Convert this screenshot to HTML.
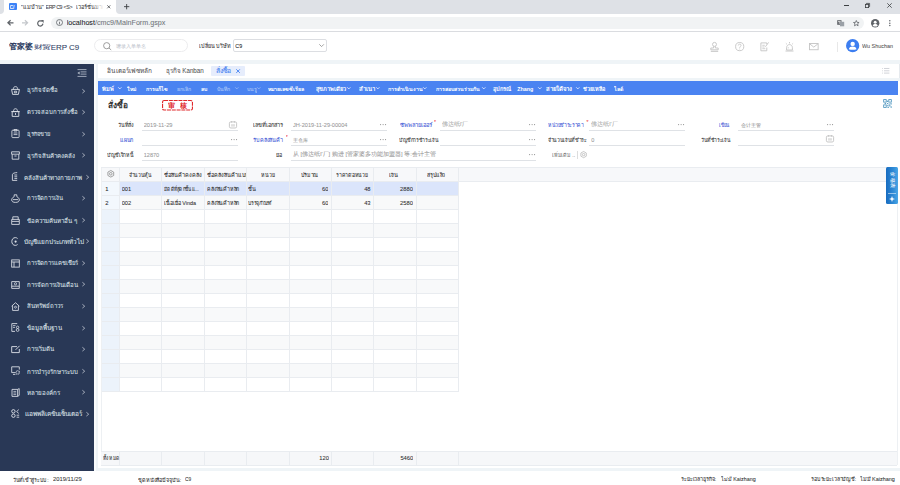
<!DOCTYPE html>
<html><head><meta charset="utf-8"><title>ERP C9</title>
<style>
html,body{margin:0;padding:0;}
body{width:900px;height:485px;overflow:hidden;position:relative;background:#fff;font-family:"Liberation Sans",sans-serif;}
.r{position:absolute;box-sizing:border-box;}
.t{position:absolute;white-space:nowrap;overflow:hidden;-webkit-text-stroke:0.06px currentColor;}
svg{overflow:visible;}
</style></head><body>

<div class="r" style="left:0.00px;top:0.00px;width:900.00px;height:14.00px;background:#dee1e6;"></div>
<div class="r" style="left:0.00px;top:0.00px;width:120.00px;height:14.00px;background:#ffffff;"></div>
<div class="r" style="left:0.00px;top:0.00px;width:4.00px;height:14.00px;background:#dee1e6;border-bottom-right-radius:4px;"></div>
<div class="r" style="left:116.00px;top:0.00px;width:784.00px;height:14.00px;background:#dee1e6;border-bottom-left-radius:4px;"></div>
<div class="r" style="left:9.30px;top:3.00px;width:7.70px;height:7.00px;background:#3b82f6;border-radius:1px;"></div>
<div class="t " style="top:3.20px;height:8.00px;line-height:8.00px;font-size:5px;color:#fff;font-weight:700;-webkit-text-stroke:0;left:9.60px;width:7.20px;letter-spacing:-0.3px;">C/</div>
<div class="t " style="top:3.12px;height:8.96px;line-height:8.96px;font-size:5.6px;color:#3c4043;left:20.80px;width:25.00px;">"แม่บ้าน"</div>
<div class="t " style="top:2.66px;height:8.48px;line-height:8.48px;font-size:5.3px;color:#3c4043;left:45.60px;width:17.00px;letter-spacing:-0.42px;">ERP C9</div>
<div class="t " style="top:2.66px;height:8.48px;line-height:8.48px;font-size:5.3px;color:#3c4043;left:63.40px;width:11.00px;letter-spacing:-0.3px;">&lt;S&gt;</div>
<div class="t " style="top:3.12px;height:8.96px;line-height:8.96px;font-size:5.6px;color:#3c4043;left:75.80px;width:27.00px;">เวอร์ชั่นมาตรฐาน</div>
<div class="r" style="left:92.00px;top:0.00px;width:12.00px;height:14.00px;background:linear-gradient(90deg,rgba(255,255,255,0),#fff);"></div>
<svg class="r" style="left:106.90px;top:5.00px;" width="3.6" height="3.6" viewBox="0 0 3.6 3.6"><path d="M0.3 0.3L3.3 3.3M3.3 0.3L0.3 3.3" stroke="#3c4043" stroke-width="0.75"/></svg>
<svg class="r" style="left:124.00px;top:3.60px;" width="5.3" height="5.3" viewBox="0 0 5.3 5.3"><path d="M2.65 0V5.3M0 2.65H5.3" stroke="#3c4043" stroke-width="0.9"/></svg>
<div class="r" style="left:844.00px;top:5.10px;width:5.00px;height:0.65px;background:#3c4043;"></div>
<svg class="r" style="left:865.00px;top:3.00px;" width="5" height="5" viewBox="0 0 5 5"><rect x="0.4" y="1.4" width="3.2" height="3.2" fill="none" stroke="#3c4043" stroke-width="0.8"/><path d="M1.4 1.4V0.4H4.6V3.6H3.6" fill="none" stroke="#3c4043" stroke-width="0.8"/></svg>
<svg class="r" style="left:886.80px;top:3.00px;" width="5" height="5" viewBox="0 0 5 5"><path d="M0.3 0.3L4.7 4.7M4.7 0.3L0.3 4.7" stroke="#3c4043" stroke-width="0.8"/></svg>
<div class="r" style="left:0.00px;top:14.00px;width:900.00px;height:17.00px;background:#ffffff;"></div>
<div class="r" style="left:0.00px;top:31.00px;width:900.00px;height:1.00px;background:#dadce0;"></div>
<svg class="r" style="left:7.00px;top:20.00px;" width="6.5" height="5.6" viewBox="0 0 6.5 5.6"><path d="M6.5 2.8H1M3.6 0.2L0.9 2.8L3.6 5.4" fill="none" stroke="#5f6368" stroke-width="1.25"/></svg>
<svg class="r" style="left:22.00px;top:20.00px;" width="6.5" height="5.6" viewBox="0 0 6.5 5.6"><path d="M0 2.8H5.5M2.9 0.2L5.6 2.8L2.9 5.4" fill="none" stroke="#c4c7cb" stroke-width="1.2"/></svg>
<svg class="r" style="left:37.00px;top:19.60px;" width="6.8" height="6.8" viewBox="0 0 6.8 6.8"><path d="M5.9 3.6A2.6 2.6 0 1 1 4.9 1.4" fill="none" stroke="#5f6368" stroke-width="1.2"/><path d="M3.7 0H6.6V2.9Z" fill="#5f6368"/></svg>
<div class="r" style="left:51.00px;top:16.50px;width:813.00px;height:12.50px;background:#f1f3f4;border-radius:6.25px;"></div>
<svg class="r" style="left:55.50px;top:19.30px;" width="7" height="7" viewBox="0 0 7 7"><circle cx="3.5" cy="3.5" r="3" fill="none" stroke="#5f6368" stroke-width="0.8"/><path d="M3.5 3V5.4" stroke="#5f6368" stroke-width="0.8"/><circle cx="3.5" cy="1.9" r="0.45" fill="#5f6368"/></svg>
<div class="t " style="top:17.57px;height:11.46px;line-height:11.46px;font-size:7.163px;color:#70757a;left:66.70px;width:102.60px;"><span style="color:#202124">localhost</span>/cmc9/MainForm.gspx</div>
<svg class="r" style="left:837.00px;top:19.50px;" width="7.4" height="6.5" viewBox="0 0 7.4 6.5"><rect x="0.2" y="0.2" width="4.3" height="4.6" fill="#5f6368"/><rect x="3" y="1.8" width="4.2" height="4.5" fill="#9aa0a6"/><path d="M1 1.5H3.7M2.3 1.5V3.8" stroke="#fff" stroke-width="0.6"/></svg>
<svg class="r" style="left:852.80px;top:19.60px;" width="6.6" height="6.4" viewBox="0 0 6.6 6.4"><path d="M3.3 0.5L4.1 2.4L6.1 2.5L4.6 3.8L5.1 5.8L3.3 4.7L1.5 5.8L2 3.8L0.5 2.5L2.5 2.4Z" fill="none" stroke="#5f6368" stroke-width="0.8" stroke-linejoin="round"/></svg>
<svg class="r" style="left:870.60px;top:18.80px;" width="8.4" height="8.4" viewBox="0 0 8.4 8.4"><circle cx="4.2" cy="4.2" r="4.2" fill="#5f6368"/><circle cx="4.2" cy="3.2" r="1.5" fill="#fff"/><path d="M1.6 6.4C2.3 5.2 3.2 4.9 4.2 4.9C5.2 4.9 6.1 5.2 6.8 6.4C6.1 7.2 5.2 7.6 4.2 7.6C3.2 7.6 2.3 7.2 1.6 6.4Z" fill="#fff"/></svg>
<svg class="r" style="left:889.30px;top:19.70px;" width="1.6" height="6.4" viewBox="0 0 1.6 6.4"><circle cx="0.8" cy="0.8" r="0.75" fill="#5f6368"/><circle cx="0.8" cy="3.2" r="0.75" fill="#5f6368"/><circle cx="0.8" cy="5.6" r="0.75" fill="#5f6368"/></svg>
<div class="t " style="top:40.55px;height:12.89px;line-height:12.89px;font-size:8.059px;color:#2b3a5e;font-weight:700;-webkit-text-stroke:0;left:9.00px;width:29.30px;">管家婆</div>
<div class="t " style="top:41.40px;height:13.20px;line-height:13.20px;font-size:8.25px;color:#34426a;left:34.30px;width:20.50px;transform:scaleY(0.68);">财贸</div>
<div class="t " style="top:42.12px;height:12.77px;line-height:12.77px;font-size:7.981px;color:#2b3a5e;left:50.80px;width:20.40px;">ERP</div>
<div class="t " style="top:42.11px;height:12.77px;line-height:12.77px;font-size:7.983px;color:#2b3a5e;left:69.00px;width:14.20px;">C9</div>
<div class="r" style="left:94.00px;top:39.00px;width:94.00px;height:13.30px;background:#fff;border:0.7px solid #ececee;border-radius:7px;"></div>
<svg class="r" style="left:102.80px;top:41.80px;" width="8.6" height="8.2" viewBox="0 0 8.6 8.2"><circle cx="3.7" cy="3.7" r="3.1" fill="none" stroke="#8c8c8c" stroke-width="0.85"/><path d="M6 6L8.2 8" stroke="#8c8c8c" stroke-width="0.85"/></svg>
<div class="t " style="top:42.41px;height:8.39px;line-height:8.39px;font-size:5.242px;color:#c0c4cc;left:116.30px;width:37.70px;">请录入单单名</div>
<div class="t " style="top:41.66px;height:9.28px;line-height:9.28px;font-size:5.8px;color:#333;left:199.20px;width:37.88px;transform:scaleX(0.940);transform-origin:0 50%;">เปลี่ยน บริษัท</div>
<div class="r" style="left:233.30px;top:39.00px;width:93.40px;height:13.30px;background:#fff;border:0.7px solid #dcdee2;border-radius:2px;"></div>
<div class="t " style="top:42.18px;height:8.64px;line-height:8.64px;font-size:5.399px;color:#222;left:235.30px;width:10.90px;">C9</div>
<svg class="r" style="left:319.40px;top:44.30px;" width="5.2" height="3" viewBox="0 0 5.2 3"><path d="M0.3 0.3L2.6 2.6L4.9 0.3" fill="none" stroke="#8c8c8c" stroke-width="0.8"/></svg>
<svg class="r" style="left:710.00px;top:41.80px;" width="9" height="10" viewBox="0 0 9 10"><circle cx="4.5" cy="2.4" r="2" fill="none" stroke="#c4c4c4" stroke-width="0.9"/><path d="M3.6 4.3V6H0.8V7.8H8.2V6H5.4V4.3" fill="none" stroke="#c4c4c4" stroke-width="0.9"/><path d="M0.8 9.3H8.2" stroke="#c4c4c4" stroke-width="1"/></svg>
<svg class="r" style="left:735.00px;top:42.30px;" width="9.4" height="9.2" viewBox="0 0 9.4 9.2"><circle cx="4.7" cy="4.6" r="4.1" fill="none" stroke="#c4c4c4" stroke-width="0.9"/><path d="M3.3 3.5C3.3 2.6 4 2.1 4.7 2.1C5.5 2.1 6.1 2.7 6.1 3.4C6.1 4.4 4.7 4.6 4.7 5.6V5.9" fill="none" stroke="#c4c4c4" stroke-width="0.85"/><circle cx="4.7" cy="7.1" r="0.5" fill="#c4c4c4"/></svg>
<svg class="r" style="left:760.00px;top:42.30px;" width="9" height="9.4" viewBox="0 0 9 9.4"><path d="M6.8 2.3V0.9H0.9V8.8H6.8V5.5" fill="none" stroke="#c4c4c4" stroke-width="0.9"/><path d="M2.3 3.3H4.8M2.3 5H4.6M2.3 6.7H5.3" stroke="#c4c4c4" stroke-width="0.8"/><path d="M5.4 4.8L8.6 0.4" stroke="#c4c4c4" stroke-width="0.9"/></svg>
<svg class="r" style="left:785.00px;top:42.30px;" width="9" height="9.5" viewBox="0 0 9 9.5"><path d="M1.6 8V5.7C1.6 3.8 2.9 2.6 4.5 2.6C6.1 2.6 7.4 3.8 7.4 5.7V8Z" fill="none" stroke="#c4c4c4" stroke-width="0.9"/><path d="M0.5 9H8.5M4.5 0V1.4M0.9 1.3L1.8 2.2M8.1 1.3L7.2 2.2" stroke="#c4c4c4" stroke-width="0.9"/><path d="M3.3 6.4V5.2" stroke="#c4c4c4" stroke-width="0.7"/></svg>
<svg class="r" style="left:809.40px;top:43.40px;" width="9.6" height="7.2" viewBox="0 0 9.6 7.2"><rect x="0.45" y="0.45" width="8.7" height="6.3" fill="none" stroke="#c4c4c4" stroke-width="0.9"/><path d="M0.6 0.8L4.8 4.1L9 0.8" fill="none" stroke="#c4c4c4" stroke-width="0.9"/></svg>
<div class="r" style="left:837.30px;top:42.00px;width:0.70px;height:10.00px;background:#e8e8e8;"></div>
<svg class="r" style="left:845.60px;top:39.10px;" width="13.3" height="13.3" viewBox="0 0 13.3 13.3"><circle cx="6.65" cy="6.65" r="6.65" fill="#3d7ef0"/><circle cx="6.65" cy="4.9" r="2.2" fill="#fff"/><path d="M2.8 10.2C3.2 8.4 4.7 7.6 6.65 7.6C8.6 7.6 10.1 8.4 10.5 10.2C9.5 10.6 8.1 10.8 6.65 10.8C5.2 10.8 3.8 10.6 2.8 10.2Z" fill="#fff"/></svg>
<div class="t " style="top:41.63px;height:8.73px;line-height:8.73px;font-size:5.459px;color:#555;left:862.00px;width:35.10px;">Wu Shuchan</div>
<div class="r" style="left:0.00px;top:60.00px;width:900.00px;height:411.00px;background:#eff4f7;"></div>
<div class="r" style="left:0.00px;top:471.00px;width:900.00px;height:14.00px;background:#ffffff;"></div>
<div class="r" style="left:0.00px;top:64.00px;width:94.00px;height:407.00px;background:#293856;"></div>
<div class="r" style="left:94.00px;top:64.00px;width:1.50px;height:407.00px;background:#f9fbfc;"></div>
<svg class="r" style="left:77.20px;top:69.00px;" width="9.5" height="8" viewBox="0 0 9.5 8"><path d="M0.5 0.6H9.5M3.6 2.9H9.5M3.6 5.1H9.5M0.5 7.4H9.5" stroke="#b4bccb" stroke-width="0.85"/><path d="M2.6 2.4L0.4 4L2.6 5.6Z" fill="#b4bccb"/></svg>
<svg class="r" style="left:10.80px;top:86.20px;" width="9" height="9" viewBox="0 0 9 9"><path d="M0.6 3.4H8.4L7.4 8.4H1.6Z" fill="none" stroke="#dfe3ea" stroke-width="0.9"/><path d="M2.4 3.4V2.6C2.4 1.4 3.3 0.6 4.5 0.6C5.7 0.6 6.6 1.4 6.6 2.6V3.4M3.4 5.2H5.6V6.8H3.4Z" fill="none" stroke="#dfe3ea" stroke-width="0.85"/></svg>
<div class="t " style="top:86.49px;height:9.61px;line-height:9.61px;font-size:6.008px;color:#dde1e8;left:27.20px;width:33.80px;">ธุรกิจจัดซื้อ</div>
<svg class="r" style="left:82.10px;top:88.50px;" width="3.2" height="4.4" viewBox="0 0 3.2 4.4"><path d="M0.4 0.3L2.7 2.2L0.4 4.1" fill="none" stroke="#c9cfda" stroke-width="0.75"/></svg>
<svg class="r" style="left:10.80px;top:107.75px;" width="9" height="9" viewBox="0 0 9 9"><path d="M1.2 3.6H7.8V8.4H1.2Z" fill="none" stroke="#dfe3ea" stroke-width="0.9"/><path d="M2.6 3.6V2.6C2.6 1.5 3.4 0.7 4.5 0.7C5.6 0.7 6.4 1.5 6.4 2.6V3.6M0.2 3.6H8.8M4.5 5V7" fill="none" stroke="#dfe3ea" stroke-width="0.85"/></svg>
<div class="t " style="top:108.05px;height:9.60px;line-height:9.60px;font-size:6.002px;color:#dde1e8;left:27.20px;width:54.90px;">ตรวจสอบการสั่งซื้อ</div>
<svg class="r" style="left:82.10px;top:110.05px;" width="3.2" height="4.4" viewBox="0 0 3.2 4.4"><path d="M0.4 0.3L2.7 2.2L0.4 4.1" fill="none" stroke="#c9cfda" stroke-width="0.75"/></svg>
<svg class="r" style="left:10.80px;top:129.30px;" width="9" height="9" viewBox="0 0 9 9"><rect x="0.9" y="1.2" width="7.2" height="7.4" rx="0.8" fill="none" stroke="#dfe3ea" stroke-width="0.85"/><path d="M3 0.5H6V2H3Z M2.6 4H6.4M2.6 5.6H6.4" fill="none" stroke="#dfe3ea" stroke-width="0.8"/></svg>
<div class="t " style="top:129.79px;height:9.22px;line-height:9.22px;font-size:5.764px;color:#dde1e8;left:27.20px;width:28.90px;">ธุรกิจขาย</div>
<svg class="r" style="left:82.10px;top:131.60px;" width="3.2" height="4.4" viewBox="0 0 3.2 4.4"><path d="M0.4 0.3L2.7 2.2L0.4 4.1" fill="none" stroke="#c9cfda" stroke-width="0.75"/></svg>
<svg class="r" style="left:10.80px;top:150.85px;" width="9" height="9" viewBox="0 0 9 9"><path d="M0.6 0.8H8.4V3.2H0.6Z M1.2 3.2V8.2H7.8V3.2 M3.4 5H5.6" fill="none" stroke="#dfe3ea" stroke-width="0.85"/></svg>
<div class="t " style="top:151.06px;height:9.78px;line-height:9.78px;font-size:6.11px;color:#dde1e8;left:27.20px;width:51.90px;">ธุรกิจสินค้าคงคลัง</div>
<svg class="r" style="left:82.10px;top:153.15px;" width="3.2" height="4.4" viewBox="0 0 3.2 4.4"><path d="M0.4 0.3L2.7 2.2L0.4 4.1" fill="none" stroke="#c9cfda" stroke-width="0.75"/></svg>
<svg class="r" style="left:10.80px;top:172.40px;" width="9" height="9" viewBox="0 0 9 9"><path d="M6.2 0.6C3.6 0.6 1.4 1.4 1.4 2.6V8.4H6.2 M3.4 3H6.2M3.4 4.8H6.2M3.4 6.6H6.2" fill="none" stroke="#dfe3ea" stroke-width="0.85"/></svg>
<div class="t " style="top:172.55px;height:9.90px;line-height:9.90px;font-size:6.19px;color:#dde1e8;left:23.70px;width:65.40px;">คลังสินค้าทางกายภาพ</div>
<svg class="r" style="left:86.00px;top:174.70px;" width="3.2" height="4.4" viewBox="0 0 3.2 4.4"><path d="M0.4 0.3L2.7 2.2L0.4 4.1" fill="none" stroke="#c9cfda" stroke-width="0.75"/></svg>
<svg class="r" style="left:10.80px;top:193.95px;" width="9" height="9" viewBox="0 0 9 9"><path d="M3.2 0.8H5.8V2.6C7.4 3.4 8.3 4.6 8.3 6C8.3 7.6 6.8 8.4 4.5 8.4C2.2 8.4 0.7 7.6 0.7 6C0.7 4.6 1.6 3.4 3.2 2.6Z M2 5.6H7" fill="none" stroke="#dfe3ea" stroke-width="0.85"/></svg>
<div class="t " style="top:194.33px;height:9.44px;line-height:9.44px;font-size:5.897px;color:#dde1e8;left:27.20px;width:40.80px;">การจัดการเงิน</div>
<svg class="r" style="left:82.10px;top:196.25px;" width="3.2" height="4.4" viewBox="0 0 3.2 4.4"><path d="M0.4 0.3L2.7 2.2L0.4 4.1" fill="none" stroke="#c9cfda" stroke-width="0.75"/></svg>
<svg class="r" style="left:10.80px;top:215.50px;" width="9" height="9" viewBox="0 0 9 9"><path d="M1.8 3.4V0.8H7.2V3.4M0.7 3.4H8.3V5.4H0.7Z M0.7 5.4V8.4H8.3V5.4" fill="none" stroke="#dfe3ea" stroke-width="0.85"/></svg>
<div class="t " style="top:215.69px;height:9.82px;line-height:9.82px;font-size:6.137px;color:#dde1e8;left:27.20px;width:55.80px;">ข้อความค้นหาอื่น ๆ</div>
<svg class="r" style="left:82.10px;top:217.80px;" width="3.2" height="4.4" viewBox="0 0 3.2 4.4"><path d="M0.4 0.3L2.7 2.2L0.4 4.1" fill="none" stroke="#c9cfda" stroke-width="0.75"/></svg>
<svg class="r" style="left:10.80px;top:237.05px;" width="9" height="9" viewBox="0 0 9 9"><path d="M6.6 1.5C5.9 0.9 5.1 0.6 4.3 0.6C2.2 0.6 0.8 2.4 0.8 4.5C0.8 6.6 2.2 8.4 4.3 8.4C5.1 8.4 5.9 8.1 6.6 7.5" fill="none" stroke="#dfe3ea" stroke-width="0.9"/><circle cx="4.6" cy="4.6" r="1.1" fill="#dfe3ea"/></svg>
<div class="t " style="top:237.03px;height:10.23px;line-height:10.23px;font-size:6.396px;color:#dde1e8;left:23.70px;width:65.40px;">บัญชีแยกประเภททั่วไป</div>
<svg class="r" style="left:86.00px;top:239.35px;" width="3.2" height="4.4" viewBox="0 0 3.2 4.4"><path d="M0.4 0.3L2.7 2.2L0.4 4.1" fill="none" stroke="#c9cfda" stroke-width="0.75"/></svg>
<svg class="r" style="left:10.80px;top:258.60px;" width="9" height="9" viewBox="0 0 9 9"><rect x="0.7" y="0.9" width="7.6" height="7.2" fill="none" stroke="#dfe3ea" stroke-width="0.85"/><path d="M0.7 3H8.3M3 3V8.1" stroke="#dfe3ea" stroke-width="0.85"/></svg>
<div class="t " style="top:258.92px;height:9.56px;line-height:9.56px;font-size:5.977px;color:#dde1e8;left:27.20px;width:56.60px;">การจัดการแคชเชียร์</div>
<svg class="r" style="left:82.10px;top:260.90px;" width="3.2" height="4.4" viewBox="0 0 3.2 4.4"><path d="M0.4 0.3L2.7 2.2L0.4 4.1" fill="none" stroke="#c9cfda" stroke-width="0.75"/></svg>
<svg class="r" style="left:10.80px;top:280.15px;" width="9" height="9" viewBox="0 0 9 9"><path d="M0.7 1.6H8.3V8.4H0.7Z M0.7 6.2H8.3" fill="none" stroke="#dfe3ea" stroke-width="0.85"/><circle cx="4.5" cy="3.8" r="1.1" fill="none" stroke="#dfe3ea" stroke-width="0.75"/></svg>
<div class="t " style="top:280.36px;height:9.77px;line-height:9.77px;font-size:6.108px;color:#dde1e8;left:27.20px;width:55.80px;">การจัดการเงินเดือน</div>
<svg class="r" style="left:82.10px;top:282.45px;" width="3.2" height="4.4" viewBox="0 0 3.2 4.4"><path d="M0.4 0.3L2.7 2.2L0.4 4.1" fill="none" stroke="#c9cfda" stroke-width="0.75"/></svg>
<svg class="r" style="left:10.80px;top:301.70px;" width="9" height="9" viewBox="0 0 9 9"><path d="M0.6 4.2L4.5 0.7L8.4 4.2M1.6 3.4V8.4H7.4V3.4" fill="none" stroke="#dfe3ea" stroke-width="0.85"/><circle cx="4.5" cy="5.2" r="1" fill="none" stroke="#dfe3ea" stroke-width="0.75"/></svg>
<div class="t " style="top:301.96px;height:9.68px;line-height:9.68px;font-size:6.053px;color:#dde1e8;left:27.20px;width:40.80px;">สินทรัพย์ถาวร</div>
<svg class="r" style="left:82.10px;top:304.00px;" width="3.2" height="4.4" viewBox="0 0 3.2 4.4"><path d="M0.4 0.3L2.7 2.2L0.4 4.1" fill="none" stroke="#c9cfda" stroke-width="0.75"/></svg>
<svg class="r" style="left:10.80px;top:323.25px;" width="9" height="9" viewBox="0 0 9 9"><path d="M6 1V0.6H0.8V8.4H4" fill="none" stroke="#dfe3ea" stroke-width="0.85"/><path d="M2 2.6H4.5M2 4.4H4" stroke="#dfe3ea" stroke-width="0.75"/><circle cx="6.6" cy="4.3" r="1.2" fill="none" stroke="#dfe3ea" stroke-width="0.75"/><circle cx="6.6" cy="7" r="1.4" fill="none" stroke="#dfe3ea" stroke-width="0.75"/></svg>
<div class="t " style="top:323.34px;height:10.03px;line-height:10.03px;font-size:6.268px;color:#dde1e8;left:27.20px;width:39.10px;">ข้อมูลพื้นฐาน</div>
<svg class="r" style="left:82.10px;top:325.55px;" width="3.2" height="4.4" viewBox="0 0 3.2 4.4"><path d="M0.4 0.3L2.7 2.2L0.4 4.1" fill="none" stroke="#c9cfda" stroke-width="0.75"/></svg>
<svg class="r" style="left:10.80px;top:344.80px;" width="9" height="9" viewBox="0 0 9 9"><path d="M6 1.6H0.7V7.6H8.3V4" fill="none" stroke="#dfe3ea" stroke-width="0.9"/><path d="M4.6 4.8L8.6 0.8" stroke="#dfe3ea" stroke-width="0.9"/></svg>
<div class="t " style="top:345.04px;height:9.71px;line-height:9.71px;font-size:6.071px;color:#dde1e8;left:27.20px;width:31.20px;">การเริ่มต้น</div>
<svg class="r" style="left:82.10px;top:347.10px;" width="3.2" height="4.4" viewBox="0 0 3.2 4.4"><path d="M0.4 0.3L2.7 2.2L0.4 4.1" fill="none" stroke="#c9cfda" stroke-width="0.75"/></svg>
<svg class="r" style="left:10.80px;top:366.35px;" width="9" height="9" viewBox="0 0 9 9"><path d="M4 6.6H0.7V0.8H8.3V3.6 M2 8.4H4.4" fill="none" stroke="#dfe3ea" stroke-width="0.85"/><circle cx="6.6" cy="6.4" r="1.7" fill="none" stroke="#dfe3ea" stroke-width="1.1" stroke-dasharray="0.9 0.5"/></svg>
<div class="t " style="top:366.58px;height:9.74px;line-height:9.74px;font-size:6.088px;color:#dde1e8;left:27.20px;width:56.60px;">การบำรุงรักษาระบบ</div>
<svg class="r" style="left:82.10px;top:368.65px;" width="3.2" height="4.4" viewBox="0 0 3.2 4.4"><path d="M0.4 0.3L2.7 2.2L0.4 4.1" fill="none" stroke="#c9cfda" stroke-width="0.75"/></svg>
<svg class="r" style="left:10.80px;top:387.90px;" width="9" height="9" viewBox="0 0 9 9"><path d="M1 1.4H6.6V8.4H1Z M6.6 1.4L8.2 0.6V7.4L6.6 8.4" fill="none" stroke="#dfe3ea" stroke-width="0.85"/><path d="M2.4 3.4H5.2M2.4 5H5.2M2.4 6.6H5.2" fill="none" stroke="#dfe3ea" stroke-width="0.7"/></svg>
<div class="t " style="top:388.10px;height:9.79px;line-height:9.79px;font-size:6.121px;color:#dde1e8;left:27.20px;width:37.30px;">หลายองค์กร</div>
<svg class="r" style="left:82.10px;top:390.20px;" width="3.2" height="4.4" viewBox="0 0 3.2 4.4"><path d="M0.4 0.3L2.7 2.2L0.4 4.1" fill="none" stroke="#c9cfda" stroke-width="0.75"/></svg>
<svg class="r" style="left:10.80px;top:409.45px;" width="9" height="9" viewBox="0 0 9 9"><circle cx="2.4" cy="2.3" r="1.7" fill="none" stroke="#dfe3ea" stroke-width="0.9"/><circle cx="2.4" cy="6.7" r="1.7" fill="none" stroke="#dfe3ea" stroke-width="0.9"/><path d="M7.8 0.6L5.6 2.6L7.8 4.4M5.6 6.2H8.2M5.6 8.2H8.2" fill="none" stroke="#dfe3ea" stroke-width="0.85"/></svg>
<div class="t " style="top:409.32px;height:10.46px;line-height:10.46px;font-size:6.535px;color:#dde1e8;left:24.60px;width:63.60px;">แอพพลิเคชั่นเซ็นเตอร์</div>
<svg class="r" style="left:86.00px;top:411.75px;" width="3.2" height="4.4" viewBox="0 0 3.2 4.4"><path d="M0.4 0.3L2.7 2.2L0.4 4.1" fill="none" stroke="#c9cfda" stroke-width="0.75"/></svg>
<div class="r" style="left:98.00px;top:64.00px;width:802.00px;height:14.00px;background:#ffffff;border-right:0.7px solid #e6eaee;"></div>
<div class="t " style="top:66.12px;height:10.56px;line-height:10.56px;font-size:6.6px;color:#555;left:106.60px;width:50.10px;transform:scaleX(0.976);transform-origin:0 50%;">อินเตอร์เฟซหลัก</div>
<div class="t " style="top:66.28px;height:10.24px;line-height:10.24px;font-size:6.4px;color:#555;left:166.10px;width:42.93px;transform:scaleX(0.971);transform-origin:0 50%;">ธุรกิจ Kanban</div>
<div class="r" style="left:211.40px;top:66.00px;width:33.60px;height:9.60px;background:#e6edfc;border-radius:1px;"></div>
<div class="t " style="top:66.12px;height:10.56px;line-height:10.56px;font-size:6.6px;color:#3f7ef2;left:216.40px;width:18.87px;transform:scaleX(1.033);transform-origin:0 50%;">สั่งซื้อ</div>
<svg class="r" style="left:235.60px;top:68.80px;" width="4.2" height="4.2" viewBox="0 0 4.2 4.2"><path d="M0.3 0.3L3.9 3.9M3.9 0.3L0.3 3.9" stroke="#3f7ef2" stroke-width="0.9"/></svg>
<svg class="r" style="left:881.80px;top:67.60px;" width="7.4" height="5.6" viewBox="0 0 7.4 5.6"><path d="M0 0.5H0.8M0 2.8H0.8M0 5.1H0.8M2 0.5H7.4M2 2.8H7.4M2 5.1H7.4" stroke="#b9bdc4" stroke-width="0.65"/></svg>
<div class="r" style="left:98.00px;top:81.00px;width:802.00px;height:387.00px;background:#ffffff;"></div>
<div class="r" style="left:98.00px;top:81.00px;width:799.50px;height:14.20px;background:#4a83f1;"></div>
<div class="t " style="top:85.01px;height:8.97px;line-height:8.97px;font-size:5.607px;color:#ffffff;font-weight:700;-webkit-text-stroke:0;left:102.10px;width:13.10px;">พิมพ์</div>
<svg class="r" style="left:118.20px;top:86.50px;" width="3.6" height="2.4" viewBox="0 0 3.6 2.4"><path d="M0.2 0.3L1.8 1.9L3.4 0.3" fill="none" stroke="#ffffff" stroke-width="0.75"/></svg>
<div class="t " style="top:85.34px;height:8.32px;line-height:8.32px;font-size:5.2px;color:#ffffff;font-weight:700;-webkit-text-stroke:0;left:127.00px;width:10.70px;">ใหม่</div>
<div class="t " style="top:85.34px;height:8.32px;line-height:8.32px;font-size:5.2px;color:#ffffff;font-weight:700;-webkit-text-stroke:0;left:145.70px;width:22.80px;">การแก้ไข</div>
<div class="t " style="top:85.34px;height:8.32px;line-height:8.32px;font-size:5.2px;color:#9dbdf7;font-weight:700;-webkit-text-stroke:0;left:176.80px;width:16.60px;">ยกเลิก</div>
<div class="t " style="top:85.34px;height:8.32px;line-height:8.32px;font-size:5.2px;color:#ffffff;font-weight:700;-webkit-text-stroke:0;left:200.80px;width:8.60px;">ลบ</div>
<div class="t " style="top:85.34px;height:8.32px;line-height:8.32px;font-size:5.2px;color:#9dbdf7;font-weight:700;-webkit-text-stroke:0;left:216.80px;width:15.20px;">บันทึก</div>
<svg class="r" style="left:235.00px;top:86.50px;" width="3.6" height="2.4" viewBox="0 0 3.6 2.4"><path d="M0.2 0.3L1.8 1.9L3.4 0.3" fill="none" stroke="#9dbdf7" stroke-width="0.75"/></svg>
<div class="t " style="top:85.34px;height:8.32px;line-height:8.32px;font-size:5.2px;color:#9dbdf7;font-weight:700;-webkit-text-stroke:0;left:246.70px;width:10.80px;">บนรู</div>
<svg class="r" style="left:257.20px;top:86.50px;" width="3.6" height="2.4" viewBox="0 0 3.6 2.4"><path d="M0.2 0.3L1.8 1.9L3.4 0.3" fill="none" stroke="#9dbdf7" stroke-width="0.75"/></svg>
<div class="t " style="top:85.25px;height:8.49px;line-height:8.49px;font-size:5.307px;color:#ffffff;font-weight:700;-webkit-text-stroke:0;left:267.80px;width:38.10px;">หมายเลขซีเรียล</div>
<div class="t " style="top:85.02px;height:8.95px;line-height:8.95px;font-size:5.594px;color:#ffffff;font-weight:700;-webkit-text-stroke:0;left:315.60px;width:31.40px;">สุขภาพเดียว</div>
<svg class="r" style="left:346.70px;top:86.50px;" width="3.6" height="2.4" viewBox="0 0 3.6 2.4"><path d="M0.2 0.3L1.8 1.9L3.4 0.3" fill="none" stroke="#ffffff" stroke-width="0.75"/></svg>
<div class="t " style="top:84.83px;height:9.34px;line-height:9.34px;font-size:5.836px;color:#ffffff;font-weight:700;-webkit-text-stroke:0;left:358.90px;width:17.60px;">สำเนา</div>
<svg class="r" style="left:376.20px;top:86.50px;" width="3.6" height="2.4" viewBox="0 0 3.6 2.4"><path d="M0.2 0.3L1.8 1.9L3.4 0.3" fill="none" stroke="#ffffff" stroke-width="0.75"/></svg>
<div class="t " style="top:85.26px;height:8.48px;line-height:8.48px;font-size:5.298px;color:#ffffff;font-weight:700;-webkit-text-stroke:0;left:388.20px;width:35.30px;">การดำเนินงาน</div>
<svg class="r" style="left:423.20px;top:86.50px;" width="3.6" height="2.4" viewBox="0 0 3.6 2.4"><path d="M0.2 0.3L1.8 1.9L3.4 0.3" fill="none" stroke="#ffffff" stroke-width="0.75"/></svg>
<div class="t " style="top:85.32px;height:8.35px;line-height:8.35px;font-size:5.22px;color:#ffffff;font-weight:700;-webkit-text-stroke:0;left:435.50px;width:46.50px;">การสอบสวนร่วมกัน</div>
<svg class="r" style="left:481.70px;top:86.50px;" width="3.6" height="2.4" viewBox="0 0 3.6 2.4"><path d="M0.2 0.3L1.8 1.9L3.4 0.3" fill="none" stroke="#ffffff" stroke-width="0.75"/></svg>
<div class="t " style="top:85.06px;height:8.89px;line-height:8.89px;font-size:5.556px;color:#ffffff;font-weight:700;-webkit-text-stroke:0;left:492.50px;width:19.70px;">อุปกรณ์</div>
<div class="t " style="top:85.23px;height:8.54px;line-height:8.54px;font-size:5.336px;color:#ffffff;font-weight:700;-webkit-text-stroke:0;left:517.30px;width:17.50px;">Zhang</div>
<svg class="r" style="left:537.80px;top:86.50px;" width="3.6" height="2.4" viewBox="0 0 3.6 2.4"><path d="M0.2 0.3L1.8 1.9L3.4 0.3" fill="none" stroke="#ffffff" stroke-width="0.75"/></svg>
<div class="t " style="top:84.78px;height:9.44px;line-height:9.44px;font-size:5.9px;color:#ffffff;font-weight:700;-webkit-text-stroke:0;left:545.90px;width:30.10px;">สายใต้จาง</div>
<svg class="r" style="left:575.70px;top:86.50px;" width="3.6" height="2.4" viewBox="0 0 3.6 2.4"><path d="M0.2 0.3L1.8 1.9L3.4 0.3" fill="none" stroke="#ffffff" stroke-width="0.75"/></svg>
<div class="t " style="top:85.04px;height:8.92px;line-height:8.92px;font-size:5.573px;color:#ffffff;font-weight:700;-webkit-text-stroke:0;left:583.20px;width:23.60px;">ช่วยเหลือ</div>
<div class="t " style="top:85.32px;height:8.35px;line-height:8.35px;font-size:5.22px;color:#ffffff;font-weight:700;-webkit-text-stroke:0;left:614.10px;width:11.40px;">ไลต์</div>
<div class="t " style="top:98.66px;height:13.28px;line-height:13.28px;font-size:8.3px;color:#333;font-weight:700;-webkit-text-stroke:0;left:108.00px;width:24.00px;">สั่งซื้อ</div>
<svg class="r" style="left:162.00px;top:100.40px;" width="31" height="10.6" viewBox="0 0 31 10.6"><rect x="0.55" y="0.55" width="29.9" height="9.5" rx="1.5" fill="none" stroke="#e0282b" stroke-width="1.1" stroke-dasharray="4 0.8"/></svg>
<div class="t " style="top:100.76px;height:10.88px;line-height:10.88px;font-size:6.8px;color:#e0282b;font-weight:700;-webkit-text-stroke:0;left:168.40px;width:10.00px;">审</div>
<div class="t " style="top:100.76px;height:10.88px;line-height:10.88px;font-size:6.8px;color:#e0282b;font-weight:700;-webkit-text-stroke:0;left:180.20px;width:10.00px;">核</div>
<svg class="r" style="left:883.00px;top:99.00px;" width="9" height="9" viewBox="0 0 9 9"><g fill="#3a8ab8"><path d="M0.3 0.3H3.6V3.6H0.3Z M1.1 1.1V2.8H2.8V1.1Z" fill-rule="evenodd"/><path d="M5.4 0.3H8.7V3.6H5.4Z M6.2 1.1V2.8H7.9V1.1Z" fill-rule="evenodd"/><path d="M0.3 5.4H3.6V8.7H0.3Z M1.1 6.2V7.9H2.8V6.2Z" fill-rule="evenodd"/><rect x="4.1" y="4.1" width="1" height="1"/><rect x="5.6" y="4.6" width="1.2" height="1"/><rect x="7.4" y="4.2" width="1.2" height="1.3"/><rect x="4.4" y="6" width="1" height="1.2"/><rect x="6.2" y="6.2" width="1.2" height="1.2"/><rect x="7.6" y="7.4" width="1.1" height="1.3"/><rect x="4.4" y="7.8" width="1.6" height="0.9"/><rect x="4.2" y="1.6" width="0.8" height="1.4"/><rect x="1.6" y="4.1" width="1.5" height="0.8"/></g></svg>
<div class="t " style="top:120.54px;height:9.12px;line-height:9.12px;font-size:5.7px;color:#333;left:117.50px;width:21.30px;transform:scaleX(0.929);transform-origin:0 50%;">วันที่สั่ง</div>
<div class="t " style="top:120.62px;height:9.16px;line-height:9.16px;font-size:5.725px;color:#999;left:143.70px;width:32.80px;font-family:"Liberation Serif",serif;">2019-11-29</div>
<svg class="r" style="left:229.30px;top:120.60px;" width="8" height="7.4" viewBox="0 0 8 7.4"><rect x="0.4" y="0.9" width="7.2" height="6.1" rx="1.4" fill="none" stroke="#b5b5b5" stroke-width="0.75"/><path d="M2.6 0V1.8M5.4 0V1.8M2.8 3.2V5.6M4 3.2V5.6M5.2 3.2V5.6" stroke="#b5b5b5" stroke-width="0.6"/></svg>
<div class="r" style="left:142.00px;top:130.00px;width:96.00px;height:0.80px;background:#dfe2e6;"></div>
<div class="t " style="top:120.54px;height:9.12px;line-height:9.12px;font-size:5.7px;color:#333;left:253.30px;width:34.01px;transform:scaleX(0.997);transform-origin:0 50%;">เลขที่เอกสาร</div>
<div class="t " style="top:120.70px;height:9.00px;line-height:9.00px;font-size:5.628px;color:#999;left:293.00px;width:58.60px;font-family:"Liberation Serif",serif;">JH-2019-11-29-00004</div>
<svg class="r" style="left:379.60px;top:123.70px;" width="6.2" height="1.2" viewBox="0 0 6.2 1.2"><circle cx="0.6" cy="0.6" r="0.55" fill="#8a8a8a"/><circle cx="3.1" cy="0.6" r="0.55" fill="#8a8a8a"/><circle cx="5.6" cy="0.6" r="0.55" fill="#8a8a8a"/></svg>
<div class="r" style="left:291.20px;top:130.00px;width:96.00px;height:0.80px;background:#dfe2e6;"></div>
<div class="t " style="top:120.54px;height:9.12px;line-height:9.12px;font-size:5.7px;color:#3d56d6;left:399.80px;width:35.94px;transform:scaleX(1.016);transform-origin:0 50%;">ซัพพลายเออร์</div>
<div class="t " style="top:118.20px;height:8.00px;line-height:8.00px;font-size:5px;color:#f04a4a;left:434.00px;width:4.00px;">*</div>
<div class="t " style="top:120.32px;height:9.57px;line-height:9.57px;font-size:5.98px;color:#aaa;left:441.90px;width:32.10px;">佛达纸l'厂</div>
<svg class="r" style="left:528.70px;top:123.70px;" width="6.2" height="1.2" viewBox="0 0 6.2 1.2"><circle cx="0.6" cy="0.6" r="0.55" fill="#8a8a8a"/><circle cx="3.1" cy="0.6" r="0.55" fill="#8a8a8a"/><circle cx="5.6" cy="0.6" r="0.55" fill="#8a8a8a"/></svg>
<div class="r" style="left:440.30px;top:130.00px;width:95.80px;height:0.80px;background:#dfe2e6;"></div>
<div class="t " style="top:120.54px;height:9.12px;line-height:9.12px;font-size:5.7px;color:#3d56d6;left:548.00px;width:44.49px;transform:scaleX(0.890);transform-origin:0 50%;">หน่วยชำระราคา</div>
<div class="t " style="top:118.20px;height:8.00px;line-height:8.00px;font-size:5px;color:#f04a4a;left:586.40px;width:4.00px;">*</div>
<div class="t " style="top:120.32px;height:9.57px;line-height:9.57px;font-size:5.98px;color:#aaa;left:591.20px;width:32.10px;">佛达纸l'厂</div>
<svg class="r" style="left:677.80px;top:123.70px;" width="6.2" height="1.2" viewBox="0 0 6.2 1.2"><circle cx="0.6" cy="0.6" r="0.55" fill="#8a8a8a"/><circle cx="3.1" cy="0.6" r="0.55" fill="#8a8a8a"/><circle cx="5.6" cy="0.6" r="0.55" fill="#8a8a8a"/></svg>
<div class="r" style="left:589.40px;top:130.00px;width:96.00px;height:0.80px;background:#dfe2e6;"></div>
<div class="t " style="top:120.54px;height:9.12px;line-height:9.12px;font-size:5.7px;color:#3d56d6;left:719.30px;width:17.86px;transform:scaleX(0.823);transform-origin:0 50%;">เขียน</div>
<div class="t " style="top:120.96px;height:8.29px;line-height:8.29px;font-size:5.18px;color:#999;left:740.70px;width:26.20px;">会计主管</div>
<svg class="r" style="left:826.90px;top:123.70px;" width="6.2" height="1.2" viewBox="0 0 6.2 1.2"><circle cx="0.6" cy="0.6" r="0.55" fill="#8a8a8a"/><circle cx="3.1" cy="0.6" r="0.55" fill="#8a8a8a"/><circle cx="5.6" cy="0.6" r="0.55" fill="#8a8a8a"/></svg>
<div class="r" style="left:738.00px;top:130.00px;width:96.40px;height:0.80px;background:#dfe2e6;"></div>
<div class="t " style="top:135.54px;height:9.12px;line-height:9.12px;font-size:5.7px;color:#3d56d6;left:120.00px;width:18.21px;transform:scaleX(0.950);transform-origin:0 50%;">แผนก</div>
<svg class="r" style="left:230.80px;top:138.70px;" width="6.2" height="1.2" viewBox="0 0 6.2 1.2"><circle cx="0.6" cy="0.6" r="0.55" fill="#8a8a8a"/><circle cx="3.1" cy="0.6" r="0.55" fill="#8a8a8a"/><circle cx="5.6" cy="0.6" r="0.55" fill="#8a8a8a"/></svg>
<div class="r" style="left:142.00px;top:145.00px;width:96.00px;height:0.80px;background:#dfe2e6;"></div>
<div class="t " style="top:135.54px;height:9.12px;line-height:9.12px;font-size:5.7px;color:#3d56d6;left:253.30px;width:35.15px;transform:scaleX(0.965);transform-origin:0 50%;">รับคลังสินค้า</div>
<div class="t " style="top:133.20px;height:8.00px;line-height:8.00px;font-size:5px;color:#f04a4a;left:285.80px;width:4.00px;">*</div>
<div class="t " style="top:136.04px;height:8.11px;line-height:8.11px;font-size:5.071px;color:#999;left:293.00px;width:20.30px;">主仓库</div>
<svg class="r" style="left:379.60px;top:138.70px;" width="6.2" height="1.2" viewBox="0 0 6.2 1.2"><circle cx="0.6" cy="0.6" r="0.55" fill="#8a8a8a"/><circle cx="3.1" cy="0.6" r="0.55" fill="#8a8a8a"/><circle cx="5.6" cy="0.6" r="0.55" fill="#8a8a8a"/></svg>
<div class="r" style="left:291.20px;top:145.00px;width:96.00px;height:0.80px;background:#dfe2e6;"></div>
<div class="t " style="top:135.54px;height:9.12px;line-height:9.12px;font-size:5.7px;color:#333;left:398.90px;width:48.46px;transform:scaleX(0.898);transform-origin:0 50%;">บัญชีการชำระเงิน</div>
<svg class="r" style="left:528.70px;top:138.70px;" width="6.2" height="1.2" viewBox="0 0 6.2 1.2"><circle cx="0.6" cy="0.6" r="0.55" fill="#8a8a8a"/><circle cx="3.1" cy="0.6" r="0.55" fill="#8a8a8a"/><circle cx="5.6" cy="0.6" r="0.55" fill="#8a8a8a"/></svg>
<div class="r" style="left:440.30px;top:145.00px;width:95.80px;height:0.80px;background:#dfe2e6;"></div>
<div class="t " style="top:135.54px;height:9.12px;line-height:9.12px;font-size:5.7px;color:#333;left:548.00px;width:47.46px;transform:scaleX(0.898);transform-origin:0 50%;">จำนวนเงินที่ชำระ</div>
<div class="t " style="top:135.62px;height:8.96px;line-height:8.96px;font-size:5.6px;color:#999;left:591.20px;width:6.00px;">0</div>
<div class="r" style="left:589.40px;top:145.00px;width:96.00px;height:0.80px;background:#dfe2e6;"></div>
<div class="t " style="top:135.54px;height:9.12px;line-height:9.12px;font-size:5.7px;color:#333;left:700.70px;width:37.51px;transform:scaleX(0.888);transform-origin:0 50%;">วันที่ชำระเงิน</div>
<svg class="r" style="left:826.00px;top:135.20px;" width="8" height="7.4" viewBox="0 0 8 7.4"><rect x="0.4" y="0.9" width="7.2" height="6.1" rx="1.4" fill="none" stroke="#b5b5b5" stroke-width="0.75"/><path d="M2.6 0V1.8M5.4 0V1.8M2.8 3.2V5.6M4 3.2V5.6M5.2 3.2V5.6" stroke="#b5b5b5" stroke-width="0.6"/></svg>
<div class="r" style="left:738.00px;top:145.00px;width:96.40px;height:0.80px;background:#dfe2e6;"></div>
<div class="t " style="top:150.54px;height:9.12px;line-height:9.12px;font-size:5.7px;color:#333;left:107.20px;width:33.44px;transform:scaleX(0.900);transform-origin:0 50%;">บัญชีเจ้าหนี้</div>
<div class="t " style="top:150.73px;height:8.93px;line-height:8.93px;font-size:5.582px;color:#999;left:143.70px;width:19.50px;font-family:"Liberation Serif",serif;">12870</div>
<div class="r" style="left:142.00px;top:160.00px;width:96.00px;height:0.80px;background:#dfe2e6;"></div>
<div class="t " style="top:150.78px;height:8.64px;line-height:8.64px;font-size:5.4px;color:#333;left:275.60px;width:9.00px;">ย่อ</div>
<div class="t " style="top:150.45px;height:9.30px;line-height:9.30px;font-size:5.812px;color:#999;left:293.00px;width:151.70px;">从 [佛达纸l'厂] 购进 [管家婆多功能加盟器] 等:会计主管</div>
<svg class="r" style="left:528.70px;top:153.70px;" width="6.2" height="1.2" viewBox="0 0 6.2 1.2"><circle cx="0.6" cy="0.6" r="0.55" fill="#8a8a8a"/><circle cx="3.1" cy="0.6" r="0.55" fill="#8a8a8a"/><circle cx="5.6" cy="0.6" r="0.55" fill="#8a8a8a"/></svg>
<div class="r" style="left:291.20px;top:160.00px;width:244.90px;height:0.80px;background:#dfe2e6;"></div>
<div class="t " style="top:150.62px;height:8.96px;line-height:8.96px;font-size:5.6px;color:#777;left:551.60px;width:28.94px;transform:scaleX(0.936);transform-origin:0 50%;">เพิ่มเติม ..</div>
<div class="r" style="left:577.10px;top:151.00px;width:0.70px;height:7.50px;background:#dddddd;"></div>
<svg class="r" style="left:580.00px;top:151.40px;" width="7.2" height="7.2" viewBox="0 0 7.2 7.2"><path d="M3.6 0.5L6.3 2V5.2L3.6 6.7L0.9 5.2V2Z" fill="none" stroke="#b0b0b0" stroke-width="0.7"/><circle cx="3.6" cy="3.6" r="1.2" fill="none" stroke="#b0b0b0" stroke-width="0.7"/></svg>
<div class="r" style="left:101.00px;top:167.50px;width:785.40px;height:14.00px;background:#f7f8fa;"></div>
<div class="r" style="left:119.50px;top:181.50px;width:338.80px;height:14.00px;background:#dbe5fb;"></div>
<div class="r" style="left:101.00px;top:181.50px;width:18.50px;height:14.00px;background:#f3f8fd;"></div>
<div class="r" style="left:119.50px;top:195.50px;width:338.80px;height:14.00px;background:#f8f9fa;"></div>
<div class="r" style="left:101.00px;top:195.50px;width:18.50px;height:14.00px;background:#f3f8fd;"></div>
<div class="r" style="left:101.00px;top:209.50px;width:18.50px;height:14.00px;background:#ecf3fb;"></div>
<div class="r" style="left:119.50px;top:223.50px;width:338.80px;height:14.00px;background:#f8f9fa;"></div>
<div class="r" style="left:101.00px;top:223.50px;width:18.50px;height:14.00px;background:#ecf3fb;"></div>
<div class="r" style="left:101.00px;top:237.50px;width:18.50px;height:14.00px;background:#ecf3fb;"></div>
<div class="r" style="left:119.50px;top:251.50px;width:338.80px;height:14.00px;background:#f8f9fa;"></div>
<div class="r" style="left:101.00px;top:251.50px;width:18.50px;height:14.00px;background:#ecf3fb;"></div>
<div class="r" style="left:101.00px;top:265.50px;width:18.50px;height:14.00px;background:#ecf3fb;"></div>
<div class="r" style="left:119.50px;top:279.50px;width:338.80px;height:14.00px;background:#f8f9fa;"></div>
<div class="r" style="left:101.00px;top:279.50px;width:18.50px;height:14.00px;background:#ecf3fb;"></div>
<div class="r" style="left:101.00px;top:293.50px;width:18.50px;height:14.00px;background:#ecf3fb;"></div>
<div class="r" style="left:119.50px;top:307.50px;width:338.80px;height:14.00px;background:#f8f9fa;"></div>
<div class="r" style="left:101.00px;top:307.50px;width:18.50px;height:14.00px;background:#ecf3fb;"></div>
<div class="r" style="left:101.00px;top:321.50px;width:18.50px;height:14.00px;background:#ecf3fb;"></div>
<div class="r" style="left:119.50px;top:335.50px;width:338.80px;height:14.00px;background:#f8f9fa;"></div>
<div class="r" style="left:101.00px;top:335.50px;width:18.50px;height:14.00px;background:#ecf3fb;"></div>
<div class="r" style="left:101.00px;top:349.50px;width:18.50px;height:14.00px;background:#ecf3fb;"></div>
<div class="r" style="left:119.50px;top:363.50px;width:338.80px;height:14.00px;background:#f8f9fa;"></div>
<div class="r" style="left:101.00px;top:363.50px;width:18.50px;height:14.00px;background:#ecf3fb;"></div>
<div class="r" style="left:101.00px;top:377.50px;width:18.50px;height:14.00px;background:#ecf3fb;"></div>
<div class="r" style="left:101.00px;top:167.10px;width:796.30px;height:0.80px;background:#e9ecf0;"></div>
<div class="r" style="left:101.00px;top:181.10px;width:796.30px;height:0.80px;background:#e9ecf0;"></div>
<div class="r" style="left:101.00px;top:195.10px;width:357.30px;height:0.80px;background:#e9ecf0;"></div>
<div class="r" style="left:101.00px;top:209.10px;width:357.30px;height:0.80px;background:#e9ecf0;"></div>
<div class="r" style="left:101.00px;top:223.10px;width:357.30px;height:0.80px;background:#e9ecf0;"></div>
<div class="r" style="left:101.00px;top:237.10px;width:357.30px;height:0.80px;background:#e9ecf0;"></div>
<div class="r" style="left:101.00px;top:251.10px;width:357.30px;height:0.80px;background:#e9ecf0;"></div>
<div class="r" style="left:101.00px;top:265.10px;width:357.30px;height:0.80px;background:#e9ecf0;"></div>
<div class="r" style="left:101.00px;top:279.10px;width:357.30px;height:0.80px;background:#e9ecf0;"></div>
<div class="r" style="left:101.00px;top:293.10px;width:357.30px;height:0.80px;background:#e9ecf0;"></div>
<div class="r" style="left:101.00px;top:307.10px;width:357.30px;height:0.80px;background:#e9ecf0;"></div>
<div class="r" style="left:101.00px;top:321.10px;width:357.30px;height:0.80px;background:#e9ecf0;"></div>
<div class="r" style="left:101.00px;top:335.10px;width:357.30px;height:0.80px;background:#e9ecf0;"></div>
<div class="r" style="left:101.00px;top:349.10px;width:357.30px;height:0.80px;background:#e9ecf0;"></div>
<div class="r" style="left:101.00px;top:363.10px;width:357.30px;height:0.80px;background:#e9ecf0;"></div>
<div class="r" style="left:101.00px;top:377.10px;width:357.30px;height:0.80px;background:#e9ecf0;"></div>
<div class="r" style="left:101.00px;top:391.10px;width:357.30px;height:0.80px;background:#e9ecf0;"></div>
<div class="r" style="left:100.60px;top:167.50px;width:0.80px;height:224.00px;background:#e9ecf0;"></div>
<div class="r" style="left:119.10px;top:167.50px;width:0.80px;height:224.00px;background:#e9ecf0;"></div>
<div class="r" style="left:161.45px;top:167.50px;width:0.80px;height:224.00px;background:#e9ecf0;"></div>
<div class="r" style="left:203.80px;top:167.50px;width:0.80px;height:224.00px;background:#e9ecf0;"></div>
<div class="r" style="left:246.15px;top:167.50px;width:0.80px;height:224.00px;background:#e9ecf0;"></div>
<div class="r" style="left:288.50px;top:167.50px;width:0.80px;height:224.00px;background:#e9ecf0;"></div>
<div class="r" style="left:330.85px;top:167.50px;width:0.80px;height:224.00px;background:#e9ecf0;"></div>
<div class="r" style="left:373.20px;top:167.50px;width:0.80px;height:224.00px;background:#e9ecf0;"></div>
<div class="r" style="left:415.55px;top:167.50px;width:0.80px;height:224.00px;background:#e9ecf0;"></div>
<div class="r" style="left:457.90px;top:167.50px;width:0.80px;height:224.00px;background:#e9ecf0;"></div>
<div class="r" style="left:896.90px;top:167.50px;width:0.80px;height:297.50px;background:#edf0f3;"></div>
<div class="r" style="left:100.60px;top:167.50px;width:0.80px;height:297.50px;background:#edf0f3;"></div>
<svg class="r" style="left:106.60px;top:170.40px;" width="7.6" height="7.6" viewBox="0 0 7.6 7.6"><path d="M3.8 0.5L6.7 2.1V5.5L3.8 7.1L0.9 5.5V2.1Z" fill="none" stroke="#8a8a8a" stroke-width="0.8"/><circle cx="3.8" cy="3.8" r="1.3" fill="none" stroke="#8a8a8a" stroke-width="0.8"/></svg>
<div class="t " style="top:170.50px;height:8.80px;line-height:8.80px;font-size:5.5px;color:#2e2e2e;left:129.30px;width:29.42px;transform:scaleX(0.904);transform-origin:0 50%;">จำนวนหุ้น</div>
<div class="t " style="top:170.50px;height:8.80px;line-height:8.80px;font-size:5.5px;color:#2e2e2e;left:164.00px;width:39.60px;">ชื่อสินค้าคงคลัง</div>
<div class="t " style="top:170.50px;height:8.80px;line-height:8.80px;font-size:5.5px;color:#2e2e2e;left:206.70px;width:39.25px;">ชื่อคลังสินค้าแบบ</div>
<div class="t " style="top:170.50px;height:8.80px;line-height:8.80px;font-size:5.5px;color:#2e2e2e;left:260.90px;width:18.18px;transform:scaleX(0.957);transform-origin:0 50%;">หน่วย</div>
<div class="t " style="top:170.50px;height:8.80px;line-height:8.80px;font-size:5.5px;color:#2e2e2e;left:301.20px;width:22.21px;transform:scaleX(0.950);transform-origin:0 50%;">ปริมาณ</div>
<div class="t " style="top:170.50px;height:8.80px;line-height:8.80px;font-size:5.5px;color:#2e2e2e;left:335.50px;width:38.29px;transform:scaleX(0.932);transform-origin:0 50%;">ราคาต่อหน่วย</div>
<div class="t " style="top:170.50px;height:8.80px;line-height:8.80px;font-size:5.5px;color:#2e2e2e;left:389.30px;width:12.91px;transform:scaleX(1.022);transform-origin:0 50%;">เงิน</div>
<div class="t " style="top:170.50px;height:8.80px;line-height:8.80px;font-size:5.5px;color:#2e2e2e;left:427.20px;width:23.15px;transform:scaleX(0.963);transform-origin:0 50%;">สรุปแล้ว</div>
<div class="t " style="top:184.56px;height:9.28px;line-height:9.28px;font-size:5.8px;color:#222;left:105.30px;width:8.00px;">1</div>
<div class="t " style="top:198.86px;height:9.28px;line-height:9.28px;font-size:5.8px;color:#222;left:105.30px;width:8.00px;">2</div>
<div class="t " style="top:184.64px;height:9.12px;line-height:9.12px;font-size:5.7px;color:#2e2e2e;left:121.70px;width:12.00px;">001</div>
<div class="t " style="top:198.94px;height:9.12px;line-height:9.12px;font-size:5.7px;color:#2e2e2e;left:121.70px;width:12.00px;">002</div>
<div class="t " style="top:184.80px;height:8.80px;line-height:8.80px;font-size:5.5px;color:#2e2e2e;left:164.00px;width:47.50px;transform:scaleX(0.815);transform-origin:0 50%;">มัดดีที่สุดก่ขึ้นแ...</div>
<div class="t " style="top:199.10px;height:8.80px;line-height:8.80px;font-size:5.5px;color:#2e2e2e;left:164.00px;width:36.56px;transform:scaleX(0.985);transform-origin:0 50%;">เนื้อเยื่อ Vinda</div>
<div class="t " style="top:184.80px;height:8.80px;line-height:8.80px;font-size:5.5px;color:#2e2e2e;left:206.70px;width:38.21px;transform:scaleX(0.950);transform-origin:0 50%;">คลังสินค้าหลัก</div>
<div class="t " style="top:199.10px;height:8.80px;line-height:8.80px;font-size:5.5px;color:#2e2e2e;left:206.70px;width:38.21px;transform:scaleX(0.950);transform-origin:0 50%;">คลังสินค้าหลัก</div>
<div class="t " style="top:184.72px;height:8.96px;line-height:8.96px;font-size:5.6px;color:#2e2e2e;left:247.60px;width:10.00px;">ชิ้น</div>
<div class="t " style="top:199.10px;height:8.80px;line-height:8.80px;font-size:5.5px;color:#2e2e2e;left:247.60px;width:30.33px;transform:scaleX(0.923);transform-origin:0 50%;">บรรจุภัณฑ์</div>
<div class="t " style="top:184.56px;height:9.28px;line-height:9.28px;font-size:5.8px;color:#2e2e2e;left:298.40px;width:30.00px;text-align:right;">60</div>
<div class="t " style="top:198.86px;height:9.28px;line-height:9.28px;font-size:5.8px;color:#2e2e2e;left:298.40px;width:30.00px;text-align:right;">60</div>
<div class="t " style="top:184.56px;height:9.28px;line-height:9.28px;font-size:5.8px;color:#2e2e2e;left:340.60px;width:30.00px;text-align:right;">48</div>
<div class="t " style="top:198.86px;height:9.28px;line-height:9.28px;font-size:5.8px;color:#2e2e2e;left:340.60px;width:30.00px;text-align:right;">43</div>
<div class="t " style="top:184.56px;height:9.28px;line-height:9.28px;font-size:5.8px;color:#2e2e2e;left:382.90px;width:30.00px;text-align:right;">2880</div>
<div class="t " style="top:198.86px;height:9.28px;line-height:9.28px;font-size:5.8px;color:#2e2e2e;left:382.90px;width:30.00px;text-align:right;">2580</div>
<div class="r" style="left:101.00px;top:451.00px;width:796.30px;height:14.00px;background:#f6f7f9;"></div>
<div class="r" style="left:101.00px;top:450.60px;width:796.30px;height:0.80px;background:#e9ecf0;"></div>
<div class="r" style="left:101.00px;top:464.60px;width:796.30px;height:0.80px;background:#e9ecf0;"></div>
<div class="r" style="left:119.10px;top:451.00px;width:0.80px;height:14.00px;background:#e9ecf0;"></div>
<div class="r" style="left:161.45px;top:451.00px;width:0.80px;height:14.00px;background:#e9ecf0;"></div>
<div class="r" style="left:203.80px;top:451.00px;width:0.80px;height:14.00px;background:#e9ecf0;"></div>
<div class="r" style="left:246.15px;top:451.00px;width:0.80px;height:14.00px;background:#e9ecf0;"></div>
<div class="r" style="left:288.50px;top:451.00px;width:0.80px;height:14.00px;background:#e9ecf0;"></div>
<div class="r" style="left:330.85px;top:451.00px;width:0.80px;height:14.00px;background:#e9ecf0;"></div>
<div class="r" style="left:373.20px;top:451.00px;width:0.80px;height:14.00px;background:#e9ecf0;"></div>
<div class="r" style="left:415.55px;top:451.00px;width:0.80px;height:14.00px;background:#e9ecf0;"></div>
<div class="r" style="left:457.90px;top:451.00px;width:0.80px;height:14.00px;background:#e9ecf0;"></div>
<div class="t " style="top:454.20px;height:8.80px;line-height:8.80px;font-size:5.5px;color:#333;left:102.70px;width:23.58px;transform:scaleX(0.874);transform-origin:0 50%;">ทั้งหมด</div>
<div class="t " style="top:453.96px;height:9.28px;line-height:9.28px;font-size:5.8px;color:#2e2e2e;left:308.90px;width:20.00px;text-align:right;">120</div>
<div class="t " style="top:453.96px;height:9.28px;line-height:9.28px;font-size:5.8px;color:#2e2e2e;left:393.30px;width:20.00px;text-align:right;">5460</div>
<div class="r" style="left:886.30px;top:167.00px;width:11.50px;height:37.30px;background:linear-gradient(90deg,#176cc0,#2f8ad6 60%,#4aa6e6);border-radius:1.5px;"></div>
<div class="t" style="left:878.5px;top:174.5px;width:26px;height:11px;font-size:5.3px;line-height:11px;color:#fff;text-align:center;transform:rotate(90deg);overflow:visible;letter-spacing:0.6px">价格表</div>
<div class="r" style="left:887.60px;top:193.20px;width:8.80px;height:0.40px;background:rgba(255,255,255,0.5);"></div>
<svg class="r" style="left:889.20px;top:196.20px;" width="6" height="6" viewBox="0 0 6 6"><path d="M3 0L3.8 2.2L6 3L3.8 3.8L3 6L2.2 3.8L0 3L2.2 2.2Z" fill="#fff"/></svg>
<div class="t " style="top:475.52px;height:8.96px;line-height:8.96px;font-size:5.6px;color:#333;left:13.30px;width:42.90px;transform:scaleX(0.923);transform-origin:0 50%;">วันที่เข้าสู่ระบบ:</div>
<div class="t " style="top:475.30px;height:9.39px;line-height:9.39px;font-size:5.87px;color:#333;left:52.90px;width:32.90px;">2019/11/29</div>
<div class="t " style="top:475.52px;height:8.96px;line-height:8.96px;font-size:5.6px;color:#333;left:137.80px;width:48.68px;transform:scaleX(0.972);transform-origin:0 50%;">ชุดหนังสือปัจจุบัน:</div>
<div class="t " style="top:476.00px;height:8.00px;line-height:8.00px;font-size:4.848px;color:#333;left:184.90px;width:10.20px;">C9</div>
<div class="t " style="top:475.22px;height:8.96px;line-height:8.96px;font-size:5.6px;color:#333;left:681.30px;width:40.72px;transform:scaleX(0.963);transform-origin:0 50%;">ระยะเวลาธุรกิจ:</div>
<div class="t " style="top:475.41px;height:8.59px;line-height:8.59px;font-size:5.366px;color:#333;left:720.80px;width:37.10px;">ไม่มี Kaizhang</div>
<div class="t " style="top:475.22px;height:8.96px;line-height:8.96px;font-size:5.6px;color:#333;left:810.70px;width:51.76px;transform:scaleX(0.952);transform-origin:0 50%;">รอบระยะเวลาบัญชี:</div>
<div class="t " style="top:475.32px;height:8.77px;line-height:8.77px;font-size:5.479px;color:#333;left:859.50px;width:37.80px;">ไม่มี Kaizhang</div>
</body></html>
